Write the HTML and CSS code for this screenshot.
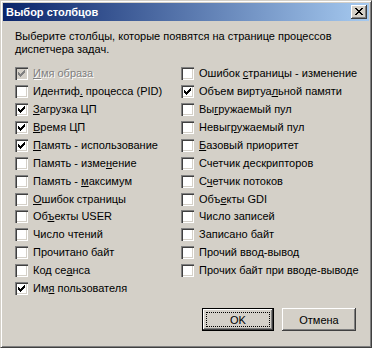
FILE: index.html
```html
<!DOCTYPE html>
<html lang="ru">
<head>
<meta charset="utf-8">
<title>Выбор столбцов</title>
<link rel="stylesheet" href="styles.css">
</head>
<body>
<div class="window">
  <div class="titlebar">
    <span class="title">Выбор столбцов</span>
    <span class="close"><svg width="8" height="7" viewBox="0 0 8 7" shape-rendering="crispEdges"><path d="M0 0h2v1h-2zM6 0h2v1h-2zM1 1h2v1h-2zM5 1h2v1h-2zM2 2h4v1h-4zM3 3h2v1h-2zM2 4h4v1h-4zM1 5h2v1h-2zM5 5h2v1h-2zM0 6h2v1h-2zM6 6h2v1h-2z" fill="#000"/></svg></span>
  </div>
  <div class="content">
    <p class="desc">Выберите столбцы, которые появятся на странице процессов<br>диспетчера задач.</p>
    <div class="cols">
      <div class="col">
        <div class="row disabled"><span class="cb checked"><svg class="mark" width="7" height="7" viewBox="0 0 7 7" shape-rendering="crispEdges"><path d="M6 0h1v1h-1zM5 1h2v1h-2zM0 2h1v1h-1zM4 2h3v1h-3zM0 3h2v1h-2zM3 3h3v1h-3zM0 4h5v1h-5zM1 5h3v1h-3zM2 6h1v1h-1z"/></svg></span><span class="lbl"><u>И</u>мя образа</span></div>
        <div class="row"><span class="cb"></span><span class="lbl">Идентиф<u>.</u> процесса (PID)</span></div>
        <div class="row"><span class="cb checked"><svg class="mark" width="7" height="7" viewBox="0 0 7 7" shape-rendering="crispEdges"><path d="M6 0h1v1h-1zM5 1h2v1h-2zM0 2h1v1h-1zM4 2h3v1h-3zM0 3h2v1h-2zM3 3h3v1h-3zM0 4h5v1h-5zM1 5h3v1h-3zM2 6h1v1h-1z"/></svg></span><span class="lbl"><u>З</u>агрузка ЦП</span></div>
        <div class="row"><span class="cb checked"><svg class="mark" width="7" height="7" viewBox="0 0 7 7" shape-rendering="crispEdges"><path d="M6 0h1v1h-1zM5 1h2v1h-2zM0 2h1v1h-1zM4 2h3v1h-3zM0 3h2v1h-2zM3 3h3v1h-3zM0 4h5v1h-5zM1 5h3v1h-3zM2 6h1v1h-1z"/></svg></span><span class="lbl"><u>В</u>ремя ЦП</span></div>
        <div class="row"><span class="cb checked"><svg class="mark" width="7" height="7" viewBox="0 0 7 7" shape-rendering="crispEdges"><path d="M6 0h1v1h-1zM5 1h2v1h-2zM0 2h1v1h-1zM4 2h3v1h-3zM0 3h2v1h-2zM3 3h3v1h-3zM0 4h5v1h-5zM1 5h3v1h-3zM2 6h1v1h-1z"/></svg></span><span class="lbl"><u>П</u>амять - использование</span></div>
        <div class="row"><span class="cb"></span><span class="lbl">Память - изме<u>н</u>ение</span></div>
        <div class="row"><span class="cb"></span><span class="lbl">Память - <u>м</u>аксимум</span></div>
        <div class="row"><span class="cb"></span><span class="lbl"><u>О</u>шибок страницы</span></div>
        <div class="row"><span class="cb"></span><span class="lbl">Об<u>ъ</u>екты USER</span></div>
        <div class="row"><span class="cb"></span><span class="lbl">Число чтений</span></div>
        <div class="row"><span class="cb"></span><span class="lbl">Прочитано байт</span></div>
        <div class="row"><span class="cb"></span><span class="lbl">Код се<u>а</u>нса</span></div>
        <div class="row"><span class="cb checked"><svg class="mark" width="7" height="7" viewBox="0 0 7 7" shape-rendering="crispEdges"><path d="M6 0h1v1h-1zM5 1h2v1h-2zM0 2h1v1h-1zM4 2h3v1h-3zM0 3h2v1h-2zM3 3h3v1h-3zM0 4h5v1h-5zM1 5h3v1h-3zM2 6h1v1h-1z"/></svg></span><span class="lbl">Им<u>я</u> пользователя</span></div>
      </div>
      <div class="col">
        <div class="row"><span class="cb"></span><span class="lbl">Ошибок <u>с</u>траницы - изменение</span></div>
        <div class="row"><span class="cb checked"><svg class="mark" width="7" height="7" viewBox="0 0 7 7" shape-rendering="crispEdges"><path d="M6 0h1v1h-1zM5 1h2v1h-2zM0 2h1v1h-1zM4 2h3v1h-3zM0 3h2v1h-2zM3 3h3v1h-3zM0 4h5v1h-5zM1 5h3v1h-3zM2 6h1v1h-1z"/></svg></span><span class="lbl">Объем виртуа<u>л</u>ьной памяти</span></div>
        <div class="row"><span class="cb"></span><span class="lbl">Вы<u>г</u>ружаемый пул</span></div>
        <div class="row"><span class="cb"></span><span class="lbl">Невыг<u>р</u>ужаемый пул</span></div>
        <div class="row"><span class="cb"></span><span class="lbl"><u>Б</u>азовый приоритет</span></div>
        <div class="row"><span class="cb"></span><span class="lbl">Счетчик <u>д</u>ескрипторов</span></div>
        <div class="row"><span class="cb"></span><span class="lbl">С<u>ч</u>етчик потоков</span></div>
        <div class="row"><span class="cb"></span><span class="lbl">Объ<u>е</u>кты GDI</span></div>
        <div class="row"><span class="cb"></span><span class="lbl">Число записей</span></div>
        <div class="row"><span class="cb"></span><span class="lbl">Записано байт</span></div>
        <div class="row"><span class="cb"></span><span class="lbl">Прочий ввод-вывод</span></div>
        <div class="row"><span class="cb"></span><span class="lbl">Прочих байт при вводе-выводе</span></div>
      </div>
    </div>
    <div class="buttons">
      <button class="btn default"><span class="focus">OK</span></button>
      <button class="btn cancel">Отмена</button>
    </div>
  </div>
</div>
</body>
</html>
```

FILE: styles.css
```css
* { box-sizing: border-box; }
html, body { margin: 0; padding: 0; background: #d4d0c8; }
body { font-family: "Liberation Sans", Arial, sans-serif; font-size: 11px; color: #000; }

.window {
  width: 372px;
  height: 348px;
  background: #d4d0c8;
  border: 1px solid;
  border-color: #d4d0c8 #404040 #404040 #d4d0c8;
  box-shadow: inset 1px 1px 0 #fff, inset -1px -1px 0 #808080;
  padding: 2px;
  display: flex;
  flex-direction: column;
}

.titlebar {
  height: 18px;
  background: linear-gradient(to right, #0a246a, #a6caf0);
  display: flex;
  align-items: center;
  justify-content: space-between;
  padding: 0 2px 0 3px;
}
.title {
  color: #fff;
  font-weight: bold;
  font-size: 11px;
  line-height: 13px;
}
.close {
  width: 16px;
  height: 14px;
  background: #d4d0c8;
  box-shadow: inset -1px -1px 0 #404040, inset 1px 1px 0 #fff, inset -2px -2px 0 #808080;
  display: flex;
  align-items: center;
  justify-content: center;
  padding: 0 1px 1px 0;
}
.close svg { display: block; }

.content {
  flex: 1;
  padding: 0 13px 0 12px;
  display: flex;
  flex-direction: column;
}
.desc {
  margin: 9px 0 0;
  line-height: 13px;
}
.cols {
  display: grid;
  grid-template-columns: 166px auto;
  margin-top: 9px;
}
.col { display: flex; flex-direction: column; }
.row {
  height: 17.875px;
  display: flex;
  align-items: center;
}
.cb {
  width: 13px;
  height: 13px;
  flex: none;
  background: #fff;
  box-shadow: inset 1px 1px 0 #808080, inset 2px 2px 0 #404040, inset -1px -1px 0 #fff, inset -2px -2px 0 #d4d0c8;
  position: relative;
}
.mark {
  position: absolute;
  left: 3px;
  top: 3px;
  fill: #000;
}
.disabled .cb { background: #d4d0c8; }
.disabled .mark { fill: #808080; }
.lbl {
  margin-left: 5px;
  line-height: 13px;
  white-space: nowrap;
}
.disabled .lbl { color: #808080; text-shadow: 1px 1px 0 #fff; }
u { text-decoration: underline; text-underline-offset: 1px; }

.buttons {
  margin-top: auto;
  margin-bottom: 14px;
  display: flex;
  justify-content: flex-end;
  gap: 8px;
}
.btn {
  font-family: inherit;
  font-size: 11px;
  color: #000;
  height: 23px;
  background: #d4d0c8;
  border: none;
  padding: 0;
  margin: 0;
  display: flex;
  align-items: center;
  justify-content: center;
}
.btn.cancel {
  width: 74px;
  box-shadow: inset -1px -1px 0 #404040, inset 1px 1px 0 #fff, inset -2px -2px 0 #808080;
}
.btn.default {
  width: 72px;
  border: 1px solid #000;
  box-shadow: inset -1px -1px 0 #404040, inset 1px 1px 0 #fff, inset -2px -2px 0 #808080;
  padding: 3px;
}
.focus {
  flex: 1;
  align-self: stretch;
  display: flex;
  align-items: center;
  justify-content: center;
  outline: 1px dotted #000;
  outline-offset: -1px;
}
```
